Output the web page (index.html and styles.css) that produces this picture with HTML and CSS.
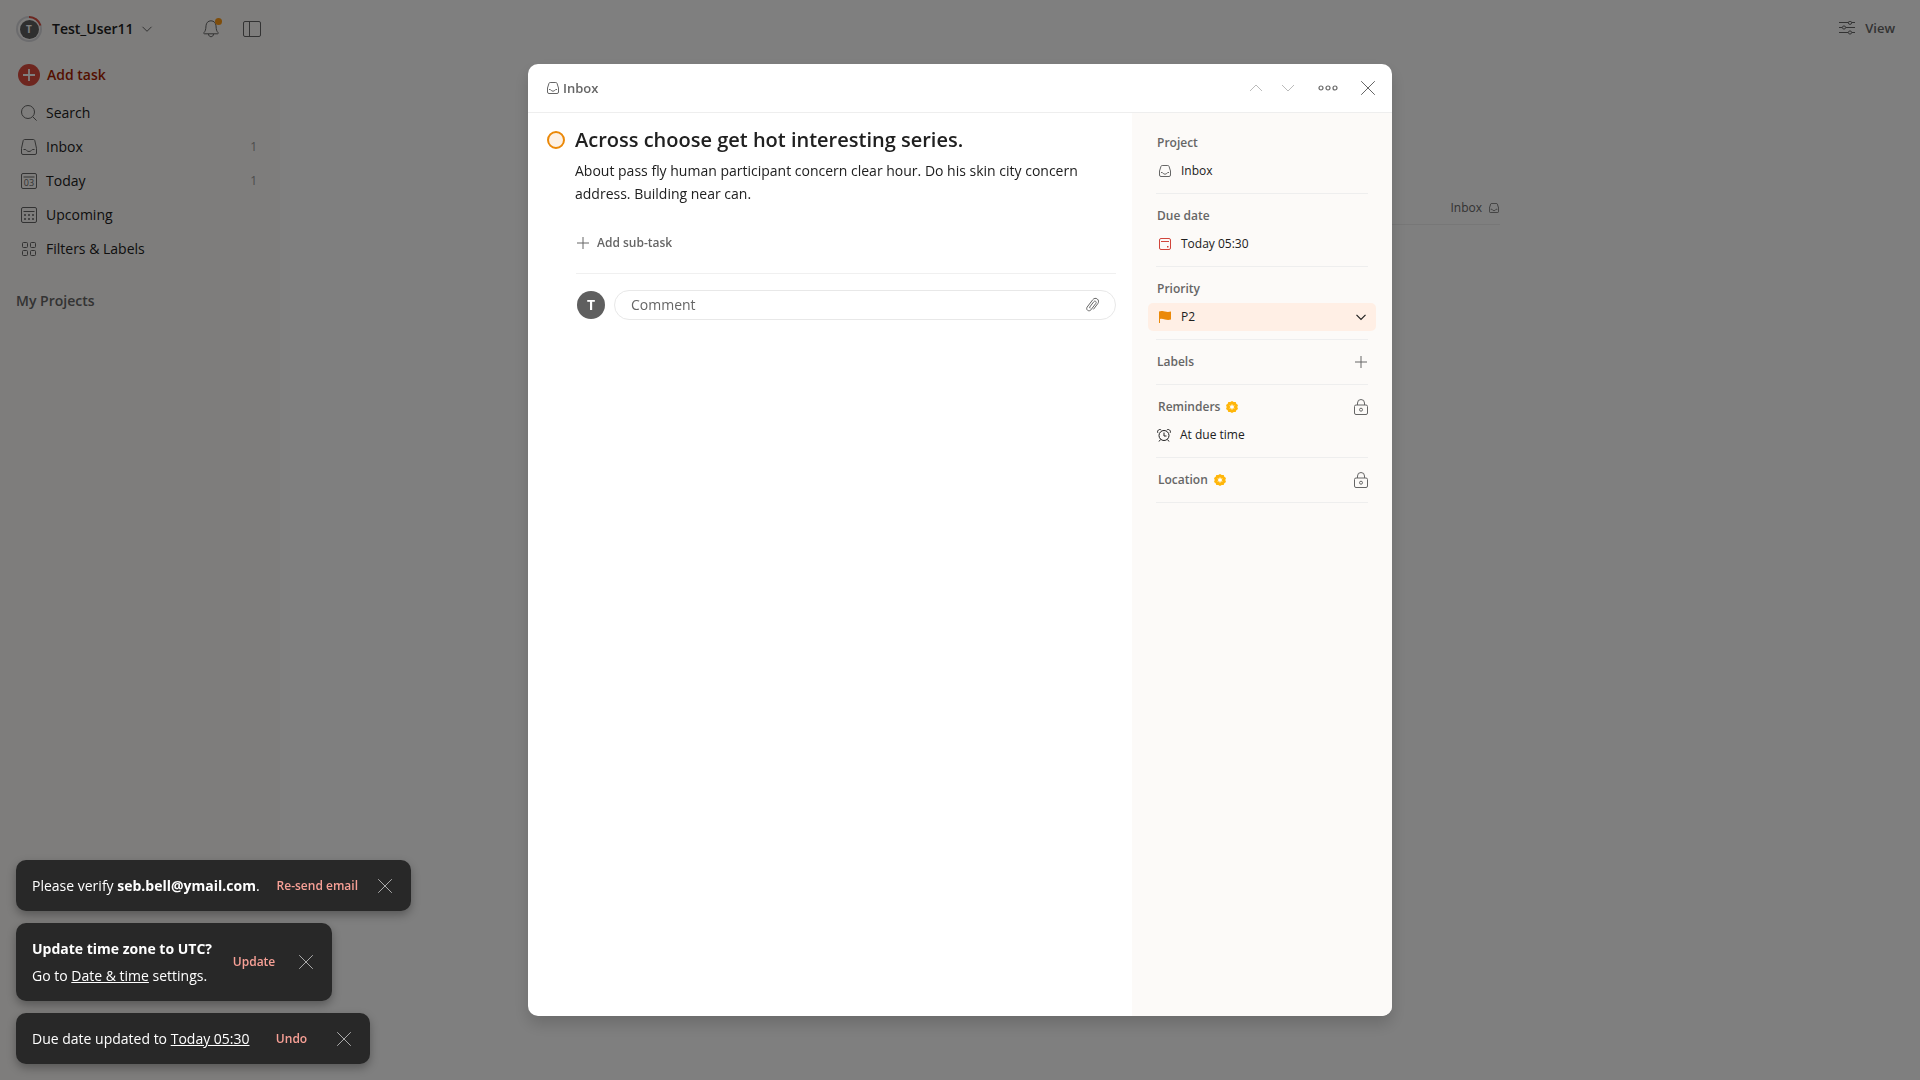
FILE: index.html
```html
<!DOCTYPE html>
<html lang="en">
<head>
<meta charset="utf-8">
<meta name="viewport" content="width=device-width, initial-scale=1">
<title>Inbox</title>
<link rel="stylesheet" href="styles.css">
</head>
<body>
<svg class="defs" aria-hidden="true">
  <symbol id="i-inbox" viewBox="0 0 16 16"><path d="M3.600.5h8.800a1.500 1.500 0 0 1 1.400 1.100L15.500 9.300v4.700a1.500 1.500 0 0 1-1.500 1.500H2A1.500 1.500 0 0 1 .5 14V9.300L2.200 1.600A1.500 1.500 0 0 1 3.600.5ZM2.500 10.500h1.800c1.200 0 1.300 2 3.700 2s2.500-2 3.700-2h1.800"/></symbol>
  <symbol id="i-inbox-sm" viewBox="0 0 12 12"><path d="M3.200.5h5.600a1.200 1.200 0 0 1 1.200.8L11.500 6v4a1.500 1.500 0 0 1-1.500 1.500H2A1.500 1.500 0 0 1 .5 10V6L2 1.300A1.200 1.200 0 0 1 3.200.5ZM2 7.500h1c1 0 1.200 1.700 3 1.700s2-1.700 3-1.700h1"/></symbol>
  <symbol id="i-close" viewBox="0 0 14 14"><path d="m.2.2 13.600 13.600M13.800.2.2 13.800"/></symbol>
  <symbol id="i-down" viewBox="0 0 12 12"><path d="m1.500 3.800 4.500 4.500 4.500-4.500"/></symbol>
  <symbol id="i-plus" viewBox="0 0 12 12"><path d="M6 0v12M0 6h12"/></symbol>
  <symbol id="i-lock" viewBox="0 0 14 16"><path d="M2 6h10a1.500 1.500 0 0 1 1.500 1.500V14a1.500 1.500 0 0 1-1.500 1.500H2A1.500 1.500 0 0 1 .5 14V7.500A1.500 1.500 0 0 1 2 6ZM3.500 6V4a3.500 3.500 0 0 1 7 0v2"/><circle cx="7" cy="10.700" r="1.500"/></symbol>
  <symbol id="i-star" viewBox="0 0 12 12"><path fill="#ffb60a" stroke="none" d="M6 0 7.700 1.100 9.700.9 10.300 2.800 12 4 11.300 6 12 8l-1.700 1.200-.6 1.900-2-.2L6 12l-1.700-1.100-2 .2-.6-1.900L0 8l.7-2L0 4l1.700-1.200L2.300.9l2 .2z"/><path fill="#fff" stroke="none" d="m6 2.800.7 2 2.100-.4L7.400 6l1.400 1.600-2.100-.4L6 9.200l-.7-2-2.100.4L4.600 6 3.200 4.400l2.100.4z"/></symbol>
</svg>

<div class="app">
  <nav class="sidebar">
    <div class="sidebar-top">
      <button class="user">
        <span class="ring"><svg class="icon" width="26" height="26" viewBox="0 0 26 26"><circle cx="13" cy="13" r="12" stroke="#d8d8dc" stroke-width="2"/><path d="M13 1a12 12 0 0 1 11.500 8.500" stroke="#dc4c3e" stroke-width="2"/></svg><span class="initial">T</span></span>
        <span>Test_User11</span>
        <svg class="icon" width="12" height="12"><use href="#i-down"/></svg>
      </button>
      <button class="icon-btn bell" aria-label="Notifications"><svg class="icon" width="16" height="18" viewBox="0 0 16 18"><path d="M8 .8c3 0 4.800 2.200 5 5 .2 4 .7 5.400 2 6.700.6.600.3 1.300-.5 1.300h-13c-.8 0-1.100-.7-.5-1.300 1.300-1.300 1.800-2.700 2-6.700.2-2.800 2-5 5-5ZM5.500 14c0 3.600 5 3.600 5 0"/></svg><span class="badge"></span></button>
      <button class="icon-btn" aria-label="Toggle sidebar"><svg class="icon" width="18" height="16" viewBox="0 0 18 16"><rect x=".5" y=".5" width="17" height="15" rx="1.500"/><path d="M6.500.5v15"/></svg></button>
    </div>
    <button class="add-task"><span class="add-dot"><svg class="icon" width="12" height="12" stroke-width="1.800"><use href="#i-plus"/></svg></span>Add task</button>
    <ul class="nav">
      <li><a href="#search"><svg class="icon" width="16" height="16" viewBox="0 0 16 16"><circle cx="7" cy="7" r="6.500"/><path d="m11.800 11.800 3.800 3.800"/></svg>Search</a></li>
      <li><a href="#inbox"><svg class="icon" width="16" height="16"><use href="#i-inbox"/></svg>Inbox<span class="count">1</span></a></li>
      <li><a href="#today"><svg class="icon" width="16" height="16" viewBox="0 0 16 16"><rect x=".5" y=".5" width="15" height="15" rx="1.500"/><path d="M2.500 4h11"/><text x="8" y="13" class="day">03</text></svg>Today<span class="count">1</span></a></li>
      <li><a href="#upcoming"><svg class="icon" width="16" height="16" viewBox="0 0 16 16"><rect x=".5" y=".5" width="15" height="15" rx="1.500"/><path d="M2.500 4.500h11"/><path stroke-width="1.500" stroke-dasharray="2 2" d="M3 8h10M3 12h10"/></svg>Upcoming</a></li>
      <li><a href="#filters"><svg class="icon" width="16" height="16" viewBox="0 0 16 16"><rect x="1.500" y="1.500" width="5" height="5" rx="1"/><rect x="9.500" y="1.500" width="5" height="5" rx="1"/><rect x="1.500" y="9.500" width="5" height="5" rx="1"/><rect x="9.500" y="9.500" width="5" height="5" rx="1"/></svg>Filters &amp; Labels</a></li>
    </ul>
    <a class="projects" href="#projects">My Projects</a>
  </nav>
  <main class="content">
    <div class="toolbar"><button class="view"><svg class="icon" width="16" height="14" viewBox="0 0 16 14"><path d="M0 1.500h9M13 1.500h3M0 6.500h3M7 6.500h9M0 11.500h9M13 11.500h3"/><circle cx="11" cy="1.800" r="1.600"/><circle cx="5" cy="6.500" r="1.600"/><circle cx="11" cy="11.500" r="1.600"/></svg>View</button></div>
    <div class="list"><a class="list-row" href="#inbox">Inbox<svg class="icon" width="10" height="10"><use href="#i-inbox-sm"/></svg></a></div>
  </main>
</div>

<div class="overlay">
  <section class="modal" role="dialog" aria-labelledby="task-title">
    <header class="modal-head">
      <a class="crumb" href="#inbox"><svg class="icon" width="12" height="12"><use href="#i-inbox-sm"/></svg>Inbox</a>
      <div class="arrows">
        <button class="head-btn" disabled aria-label="Previous task"><svg class="icon" width="12" height="12" viewBox="0 0 12 12"><path d="M0 9l6-6 6 6"/></svg></button>
        <button class="head-btn" disabled aria-label="Next task"><svg class="icon" width="12" height="12" viewBox="0 0 12 12"><path d="M0 3l6 6 6-6"/></svg></button>
      </div>
      <button class="head-btn" aria-label="More actions"><svg class="icon" width="20" height="6" viewBox="0 0 20 6" stroke-width="1.200"><circle cx="3" cy="3" r="2"/><circle cx="10" cy="3" r="2"/><circle cx="17" cy="3" r="2"/></svg></button>
      <button class="head-btn" aria-label="Close"><svg class="icon" width="14" height="14"><use href="#i-close"/></svg></button>
    </header>
    <div class="modal-body">
      <div class="task">
        <input type="checkbox" class="check" aria-labelledby="task-title">
        <div class="task-main">
          <h1 id="task-title">Across choose get hot interesting series.</h1>
          <p>About pass fly human participant concern clear hour. Do his skin city concern address. Building near can.</p>
          <button class="subtask"><svg class="icon" width="12" height="12"><use href="#i-plus"/></svg>Add sub-task</button>
          <div class="comment">
            <span class="avatar">T</span>
            <div class="field"><input type="text" placeholder="Comment" aria-label="Comment"><button class="clip" aria-label="Attach file"><svg class="icon" width="14" height="16" viewBox="0 0 14 16"><path d="m4.600 10.200 4.200-5.500c.5-.7 1.400-.7 1.900-.3.600.5.700 1.200.2 1.900l-5 6.600c-.8 1-2.200 1.200-3.300.4s-1.200-2.200-.4-3.300L7.700 2.800C8.900 1.200 10.900.9 12.300 2s1.700 3 .5 4.600l-4.400 5.800M4.600 10.200c-.2.500.2 1 .8.800"/></svg></button></div>
          </div>
        </div>
      </div>
      <aside class="details">
        <section><h2>Project</h2><button class="row"><svg class="icon" width="12" height="12"><use href="#i-inbox-sm"/></svg>Inbox</button></section>
        <section><h2>Due date</h2><button class="row"><svg class="icon due" width="12" height="12" viewBox="0 0 12 12"><rect x=".5" y=".5" width="11" height="11" rx="1.500"/><path d="M2 3.500h8"/><rect x="8" y="8" width="1.500" height="1.500" fill="currentColor" stroke="none"/></svg>Today 05:30</button></section>
        <section><h2>Priority</h2><button class="row active"><svg class="icon" width="12" height="12" viewBox="0 0 12 12"><path fill="#eb8909" stroke="none" d="M0 .6C1.500-.2 4-.2 6 .5s4 .6 6 0v8c-2 .6-4 .5-6 0S2.500 7.500 1 8v4H0z"/></svg>P2<svg class="icon end" width="12" height="12" stroke-width="1.200"><use href="#i-down"/></svg></button></section>
        <section><h2>Labels<button class="mini" aria-label="Add labels"><svg class="icon" width="12" height="12"><use href="#i-plus"/></svg></button></h2></section>
        <section><h2 class="pro">Reminders<svg class="icon" width="12" height="12"><use href="#i-star"/></svg><button class="mini" aria-label="Reminders locked"><svg class="icon" width="14" height="16"><use href="#i-lock"/></svg></button></h2><button class="row reminder"><svg class="icon dark" width="14" height="13" viewBox="0 0 14 13"><circle cx="7" cy="6.500" r="5"/><path d="M7 3.500V7h2.500M3.500 10.500 2 12.500M10.500 10.500l1.500 2M.8 3.800C-.2 1.500 2.500-.5 4.200 1M13.200 3.800c1-2.300-1.700-4.300-3.400-2.800"/></svg>At due time</button></section>
        <section><h2 class="pro">Location<svg class="icon" width="12" height="12"><use href="#i-star"/></svg><button class="mini" aria-label="Location locked"><svg class="icon" width="14" height="16"><use href="#i-lock"/></svg></button></h2></section>
      </aside>
    </div>
  </section>
</div>

<div class="toasts">
  <div class="toast"><div>Please verify <b>seb.bell@ymail.com</b>.</div><button class="action">Re-send email</button><button class="dismiss" aria-label="Dismiss"><svg class="icon" width="14" height="14"><use href="#i-close"/></svg></button></div>
  <div class="toast"><div><b>Update time zone to UTC?</b><br>Go to <a href="#settings">Date &amp; time</a> settings.</div><button class="action">Update</button><button class="dismiss" aria-label="Dismiss"><svg class="icon" width="14" height="14"><use href="#i-close"/></svg></button></div>
  <div class="toast"><div>Due date updated to <a href="#today">Today 05:30</a></div><button class="action">Undo</button><button class="dismiss" aria-label="Dismiss"><svg class="icon" width="14" height="14"><use href="#i-close"/></svg></button></div>
</div>
</body>
</html>
```
FILE: styles.css
```css
*, *::before, *::after { box-sizing: border-box; }
body {
  margin: 0;
  font: 14px/20px "Open Sans", "Noto Sans", sans-serif;
  color: #202020;
  background: #fff;
}
button, input { font: inherit; color: inherit; }
button { padding: 0; border: 0; background: none; text-align: left; }
a { color: inherit; text-decoration: none; }
h1, h2, p, ul { margin: 0; padding: 0; }
ul { list-style: none; }
.defs { display: none; }
.icon { flex: none; fill: none; stroke: currentColor; color: #666; }

.app { display: flex; min-height: 100vh; }

/* Sidebar */
.sidebar { width: 280px; flex: none; background: #fcfaf8; padding: 13px 8px; }
.sidebar-top { display: flex; align-items: center; gap: 9px; height: 32px; padding: 0 4px 0 8px; }
.user { display: flex; align-items: center; gap: 10px; flex: 1; font-weight: 600; }
.user .icon { margin-left: -3px; }
.ring { position: relative; display: grid; place-items: center; width: 26px; height: 26px; }
.ring .icon { position: absolute; inset: 0; margin: 0; }
.initial { width: 19px; height: 19px; border-radius: 50%; background: #5f5f5f; color: #fff; font-size: 10px; line-height: 19px; font-weight: 700; text-align: center; }
.icon-btn { position: relative; display: grid; place-items: center; width: 32px; height: 32px; }
.badge { position: absolute; top: 5px; right: 5px; width: 7px; height: 7px; border-radius: 50%; background: #ff9a14; }
.add-task { display: flex; align-items: center; gap: 7px; height: 36px; margin: 12px 0 3px; padding: 0 10px; color: #a81f00; font-weight: 600; }
.add-dot { display: grid; place-items: center; width: 22px; height: 22px; border-radius: 50%; background: #dc4c3e; }
.add-dot .icon { color: #fff; }
.nav a { display: flex; align-items: center; gap: 9px; height: 34px; padding: 0 15px 0 13px; }
.count { margin-left: auto; font-size: 12px; color: #999; }
.day { font-size: 9px; text-anchor: middle; fill: #666; stroke: none; }
.projects { display: block; padding: 25px 8px; font-weight: 600; color: #666; }

/* List behind the dialog */
.content { flex: 1; min-width: 0; }
.toolbar { display: flex; justify-content: flex-end; padding: 12px 25px; }
.view { display: flex; align-items: center; gap: 10px; height: 32px; font-size: 13px; font-weight: 600; color: #666; }
.list { max-width: 800px; margin: 142px auto 0; }
.list-row { display: flex; justify-content: flex-end; align-items: center; gap: 7px; padding: 0 1px 6px; border-bottom: 1px solid #eee; font-size: 12px; color: #666; }

/* Dialog */
.overlay { position: fixed; inset: 0; display: flex; justify-content: center; padding: 64px; background: rgba(0, 0, 0, .5); }
.modal { display: flex; flex-direction: column; width: 100%; max-width: 864px; border-radius: 10px; background: #fff; overflow: hidden; box-shadow: 0 8px 16px rgba(0, 0, 0, .16); }
.modal-head { display: flex; align-items: center; gap: 8px; height: 49px; flex: none; padding: 0 8px 0 19px; border-bottom: 1px solid #eee; color: #666; }
.crumb { display: flex; align-items: center; gap: 4px; font-size: 13px; font-weight: 550; margin-right: auto; }
.arrows { display: flex; }
.head-btn { display: grid; place-items: center; width: 32px; height: 32px; }
.head-btn:disabled .icon { color: #bbb; }
.modal-body { display: flex; flex: 1; min-height: 0; }
.task { display: flex; gap: 10px; flex: 1; min-width: 0; padding: 12px 16px 0 19px; }
.check { appearance: none; flex: none; width: 18px; height: 18px; margin: 6px 0; border: 2px solid #eb8909; border-radius: 50%; background: #fdf1e5; }
.task-main { flex: 1; min-width: 0; }
h1 { font-size: 20px; line-height: 30px; font-weight: 550; }
.task-main p { margin-top: 4px; line-height: 23px; }
.subtask { display: flex; align-items: center; gap: 8px; height: 28px; margin: 24px 0 16px; padding-left: 2px; font-size: 12px; font-weight: 600; color: #666; }
.comment { display: flex; align-items: center; gap: 9px; margin-left: 1px; padding: 16px 0 0 1px; border-top: 1px solid #f0f0f0; }
.avatar { width: 28px; height: 28px; border-radius: 50%; background: #5f5f5f; color: #fff; font-weight: 700; line-height: 28px; text-align: center; }
.field { display: flex; align-items: center; flex: 1; height: 30px; padding: 0 16px 0 16px; border: 1px solid #e8e8e8; border-radius: 15px; }
.field input { flex: 1; min-width: 0; padding: 0; border: 0; outline: 0; background: none; }
.field input::placeholder { color: #666; opacity: 1; }
.clip { display: grid; }

.details { width: 260px; flex: none; padding: 8px 24px; background: #fcfaf8; }
.details section { width: 212px; padding: 8px 0; border-bottom: 1px solid #eee; }
h2 { display: flex; align-items: center; gap: 6px; height: 28px; padding-left: 1px; font-size: 12px; font-weight: 600; color: #666; }
h2.pro { padding-left: 2px; }
.mini { display: grid; place-items: center; width: 14px; margin-left: auto; }
.row { display: flex; align-items: center; gap: 10px; width: 228px; height: 28px; margin: 0 -8px; padding: 0 8px 0 11px; border-radius: 5px; font-size: 12px; }
.row.active { background: #ffefe5; }
.row.reminder { padding-left: 9px; gap: 9px; }
.row .due { color: #d1453b; }
.row .dark { color: #202020; }
.row .end { margin: 0 1px 0 auto; color: #202020; }

/* Toasts */
.toasts { position: fixed; left: 16px; bottom: 16px; display: flex; flex-direction: column; align-items: flex-start; gap: 12px; }
.toast { display: flex; align-items: center; gap: 7px; padding: 12px 14px 12px 16px; border-radius: 10px; background: #282828; color: #fff; line-height: 27px; box-shadow: 0 4px 10px rgba(0, 0, 0, .3); }
.toast a { text-decoration: underline; }
.action { min-width: 68px; padding: 0 8px 0 10px; font-size: 12px; line-height: 24px; font-weight: 600; text-align: center; color: #f8a096; }
.dismiss { display: grid; place-items: center; width: 24px; height: 24px; }
.dismiss .icon { color: #aaa; }
```
